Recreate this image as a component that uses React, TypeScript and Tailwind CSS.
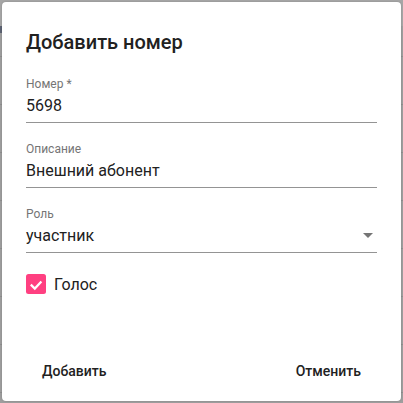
import React from "react";

function Field({ label, value, select }: { label: string; value: string; select?: boolean }) {
  return (
    <div className="flex flex-col border-b border-[#949494]">
      <div className="text-[12px] leading-[12px] text-[#757575]">{label}</div>
      <div className="mt-[6px] mb-[7px] flex h-[19px] items-center justify-between">
        <span className="text-[16px] leading-[19px] text-[#212121]">{value}</span>
        {select && (
          <svg width="10" height="5" viewBox="0 0 10 5" className="mr-[4px]">
            <path d="M0 0l5 5 5-5z" fill="#757575" />
          </svg>
        )}
      </div>
    </div>
  );
}

export default function App() {
  const rows = [0, 1, 2, 3, 4, 5, 6];
  return (
    <div className="relative h-[403px] w-[403px] overflow-hidden bg-[#9e9e9e] font-['Roboto',sans-serif]">
      <div className="flex flex-col">
        <div className="h-[26px] bg-[#a6a6a6]" />
        <div className="flex h-[7px]">
          <div className="w-[2px] bg-[#5c6272]" />
        </div>
        <div className="h-[24px] border-b border-[#8f8f8f]" />
        {rows.map((r) => (
          <div key={r} className="h-[48px] border-b border-[#8f8f8f]" />
        ))}
      </div>
      <div className="absolute left-[2px] top-[2px] flex h-[399px] w-[399px] flex-col rounded-[4px] bg-white px-6 pt-6 shadow-[0_0_2px_rgba(0,0,0,0.2)]">
        <div className="h-[32px] text-[20px] font-medium leading-[32px] text-[#212121]">Добавить номер</div>
        <div className="mt-5 flex flex-col gap-5">
          <Field label="Номер *" value="5698" />
          <Field label="Описание" value="Внешний абонент" />
          <Field label="Роль" value="участник" select />
        </div>
        <div className="mt-[21px] flex h-[20px] items-center gap-2">
          <svg width="20" height="20" viewBox="0 0 20 20">
            <rect x="0" y="0" width="20" height="20" rx="2.5" fill="#ff4081" />
            <path d="M4.8 10.6l4 4 6.6-7.2" fill="none" stroke="#ffffff" strokeWidth="2.2" />
          </svg>
          <span className="text-[16px] leading-[19px] text-[#212121]">Голос</span>
        </div>
        <div className="mt-auto mb-[20px] flex h-[20px] items-center justify-between px-4">
          <span className="text-[14px] font-medium leading-[20px] text-[#212121]">Добавить</span>
          <span className="text-[14px] font-medium leading-[20px] text-[#212121]">Отменить</span>
        </div>
      </div>
    </div>
  );
}
